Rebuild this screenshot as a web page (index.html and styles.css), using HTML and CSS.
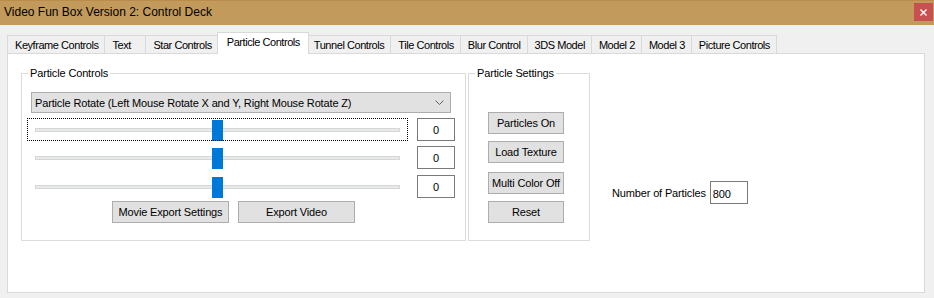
FILE: index.html
```html
<!DOCTYPE html>
<html lang="en">
	<head>
		<meta charset="UTF-8" />
		<title>Video Fun Box Version 2: Control Deck</title>
		<link rel="stylesheet" href="styles.css">
	</head>
	<body>
		<div class="titlebar">
			<span class="title">Video Fun Box Version 2: Control Deck</span>
			<button class="close" title="Close">
				<svg width="7" height="7" viewBox="0 0 7 7"><path d="M0.5 0.5 L6.5 6.5 M6.5 0.5 L0.5 6.5" stroke="#fff" stroke-width="1.4" /></svg>
			</button>
		</div>

		<!-- tab strip -->
		<div class="tabs">
			<div class="tab">Keyframe Controls</div>
			<div class="tab">Text</div>
			<div class="tab">Star Controls</div>
			<div class="tab active">Particle Controls</div>
			<div class="tab">Tunnel Controls</div>
			<div class="tab">Tile Controls</div>
			<div class="tab">Blur Control</div>
			<div class="tab">3DS Model</div>
			<div class="tab">Model 2</div>
			<div class="tab">Model 3</div>
			<div class="tab">Picture Controls</div>
		</div>

		<div class="page">
			<!-- left group -->
			<fieldset class="group controls">
				<legend>Particle Controls</legend>
				<div class="combo">
					<span>Particle Rotate (Left Mouse Rotate X and Y, Right Mouse Rotate Z)</span>
					<svg width="9" height="5" viewBox="0 0 9 5"><path d="M0.5 0.5 L4.5 4.5 L8.5 0.5" fill="none" stroke="#606060" /></svg>
				</div>
				<div class="row">
					<div class="slider focused"><input type="range" min="-100" max="100" value="0"></div>
					<input class="num" type="text" value="0">
				</div>
				<div class="row">
					<div class="slider"><input type="range" min="-100" max="100" value="0"></div>
					<input class="num" type="text" value="0">
				</div>
				<div class="row">
					<div class="slider"><input type="range" min="-100" max="100" value="0"></div>
					<input class="num" type="text" value="0">
				</div>
				<div class="export">
					<button class="btn wide">Movie Export Settings</button>
					<button class="btn wide">Export Video</button>
				</div>
			</fieldset>

			<!-- right group -->
			<fieldset class="group settings">
				<legend>Particle Settings</legend>
				<button class="btn small">Particles On</button>
				<button class="btn small">Load Texture</button>
				<button class="btn small multi">Multi Color Off</button>
				<button class="btn small">Reset</button>
			</fieldset>

			<div class="count">
				<label for="count">Number of Particles</label>
				<input id="count" type="text" value="800">
			</div>
		</div>
	</body>
</html>
```

FILE: styles.css
```css
body {
	margin: 0;
	width: 934px;
	height: 298px;
	overflow: hidden;
	background: #f0f0f0;
	font-family: "Liberation Sans", Arial, sans-serif;
	font-size: 11px;
	letter-spacing: -0.15px;
	color: #000;
}
.titlebar {
	display: flex;
	align-items: flex-start;
	height: 25px;
	background: #c29a5b;
	border-top: 1px solid #b98c4c;
	box-sizing: border-box;
}
.title {
	margin: 4px 0 0 4px;
	font-size: 12px;
	letter-spacing: 0;
}
.close {
	margin: 2px 1px 0 auto;
	width: 19px;
	height: 18px;
	padding: 0;
	border: none;
	background: #c75050;
	display: flex;
	align-items: center;
	justify-content: center;
}
.tabs {
	display: flex;
	align-items: flex-end;
	height: 21px;
	margin-top: 7px;
	padding-left: 7px;
}
.tab {
	min-width: 41px;
	height: 18px;
	line-height: 18px;
	padding: 0 6px 0 7px;
	border: 1px solid #d9d9d9;
	border-bottom: none;
	border-left: none;
	box-sizing: border-box;
	white-space: nowrap;
	letter-spacing: -0.45px;
}
.tab:first-child {
	border-left: 1px solid #d9d9d9;
}
/* the selected tab grows 2px on each side over its neighbours */
.tab.active {
	height: 22px;
	line-height: 18px;
	margin: 0 -2px -1px -2px;
	padding: 0 8px 0 9px;
	background: #fff;
	border-left: 1px solid #d9d9d9;
	position: relative;
	z-index: 1;
}
.page {
	display: flex;
	align-items: flex-start;
	margin-left: 7px;
	width: 918px;
	height: 240px;
	box-sizing: border-box;
	background: #fff;
	border: 1px solid #d9d9d9;
	padding: 13px 0 0 13px;
}
.group {
	height: 174px;
	margin: 0;
	padding: 0;
	border: 1px solid #dcdcdc;
	min-width: 0;
	box-sizing: border-box;
	display: flex;
	flex-direction: column;
	align-items: flex-start;
}
.group legend {
	padding: 0 2px;
	line-height: 13px;
}
.controls {
	width: 445px;
	padding-left: 5px;
}
.controls legend {
	margin-left: 1px;
}
.settings {
	width: 122px;
	margin-left: 2px;
	padding-left: 19px;
	padding-top: 32px;
}
.settings legend {
	margin-left: -13px;
}
.combo {
	display: flex;
	align-items: center;
	justify-content: space-between;
	width: 420px;
	height: 21px;
	margin: 12px 0 5px 4px;
	padding: 0 6px 0 3px;
	box-sizing: border-box;
	background: #e1e1e1;
	border: 1px solid #adadad;
}
.row {
	display: flex;
	align-items: flex-start;
	height: 23px;
	margin-bottom: 5px;
}
.row + .row + .row {
	margin: 1px 0 3px;
}
.slider {
	width: 381px;
	height: 23px;
	padding: 0 8px;
	box-sizing: border-box;
	outline: 1px dotted transparent;
	outline-offset: -1px;
}
.slider.focused {
	outline-color: #000;
}
.slider input {
	-webkit-appearance: none;
	appearance: none;
	display: block;
	width: 100%;
	height: 23px;
	margin: 0;
	background: transparent;
}
.slider input::-webkit-slider-runnable-track {
	height: 4px;
	background: #e7eaea;
	border: 1px solid #d6d6d6;
	box-sizing: border-box;
}
.slider input::-webkit-slider-thumb {
	-webkit-appearance: none;
	width: 11px;
	height: 21px;
	margin-top: -9px;
	background: #0078d7;
	border: none;
}
.num {
	width: 38px;
	height: 23px;
	margin-left: 9px;
	padding: 0;
	box-sizing: border-box;
	border: 1px solid #7a7a7a;
	font: inherit;
	text-align: center;
}
.btn {
	height: 22px;
	padding: 0;
	box-sizing: border-box;
	background: #e1e1e1;
	border: 1px solid #adadad;
	font: inherit;
	letter-spacing: -0.15px;
	color: #000;
}
.export {
	display: flex;
	gap: 9px;
	margin-left: 85px;
}
.wide {
	width: 117px;
}
.small {
	width: 76px;
	margin-bottom: 7px;
}
.small.multi {
	margin-top: 2px;
}
.count {
	display: flex;
	align-items: center;
	margin: 114px 0 0 22px;
}
.count input {
	width: 38px;
	height: 23px;
	margin-left: 4px;
	padding: 2px 0 0 2px;
	box-sizing: border-box;
	border: 1px solid #7a7a7a;
	font: inherit;
	letter-spacing: -0.15px;
}
```
